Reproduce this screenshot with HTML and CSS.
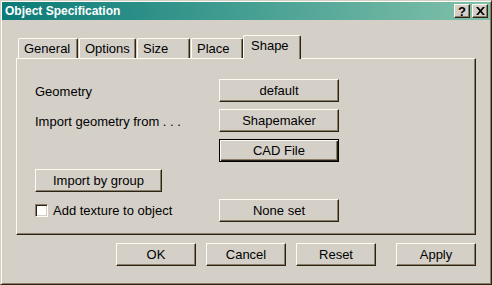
FILE: index.html
```html
<!DOCTYPE html>
<html>
<head>
  <meta charset="UTF-8">
  <title>Object Specification</title>
  <link rel="stylesheet" href="styles.css">
</head>
<body>
  <div class="window">
    <div class="titlebar">
      <span class="title">Object Specification</span>
      <div class="title-buttons">
        <div class="tbtn help">?</div>
        <div class="tbtn">
          <svg width="9" height="8" viewBox="0 0 9 8">
            <path d="M0 0h2.2l2.3 2.8 2.3-2.8h2.2l-3.4 4 3.4 4h-2.2l-2.3-2.8-2.3 2.8h-2.2l3.4-4z" fill="#000"/>
          </svg>
        </div>
      </div>
    </div>

    <div class="dialog">
      <div class="tabs">
        <div class="tab tab-general">General</div>
        <div class="tab tab-options">Options</div>
        <div class="tab tab-size">Size</div>
        <div class="tab tab-place">Place</div>
        <div class="tab tab-shape active">Shape</div>
      </div>

      <div class="pane">
        <div class="form-grid">
          <span class="label">Geometry</span>
          <div class="btn">default</div>

          <span class="label">Import geometry from . . .</span>
          <div class="btn">Shapemaker</div>

          <span></span>
          <div class="btn btn-default">CAD File</div>

          <div class="btn btn-group">Import by group</div>
          <span></span>

          <label class="check"><span class="box"></span>Add texture to object</label>
          <div class="btn">None set</div>
        </div>
      </div>

      <div class="actions">
        <div class="btn btn-action">OK</div>
        <div class="btn btn-action">Cancel</div>
        <div class="btn btn-action">Reset</div>
        <div class="btn btn-action btn-apply">Apply</div>
      </div>
    </div>
  </div>
</body>
</html>
```

FILE: styles.css
```css
body {
  margin: 0;
  padding: 0;
  background-color: #d4d0c8;
  font-family: "Liberation Sans", Arial, sans-serif;
  font-size: 13px;
  color: #000;
}
.window {
  box-sizing: border-box;
  width: 492px;
  height: 285px;
  padding: 1px;
  background-color: #d4d0c8;
  border: 1px solid;
  border-color: #d4d0c8 #2a2418 #2a2418 #d4d0c8;
  box-shadow: inset 1px 1px #fffbf0, inset -1px -1px #8c7e66;
  display: flex;
  flex-direction: column;
}
.titlebar {
  height: 18px;
  display: flex;
  align-items: center;
  justify-content: space-between;
  padding: 0 2px 0 3px;
  background: linear-gradient(to right, #0b7b78, #3f9b90 45%, #82c1aa);
}
.title {
  color: #fff;
  font-weight: bold;
  font-size: 12px;
}
.title-buttons {
  display: flex;
  gap: 2px;
}
.tbtn {
  box-sizing: border-box;
  width: 16px;
  height: 14px;
  display: flex;
  align-items: center;
  justify-content: center;
  background-color: #d4d0c8;
  border: 1px solid;
  border-color: #fffbf0 #2a2418 #2a2418 #fffbf0;
  box-shadow: inset -1px -1px #8c7e66;
}
.help {
  font-weight: bold;
  font-size: 13px;
  line-height: 1;
}
.dialog {
  flex: 1;
  display: flex;
  flex-direction: column;
  padding: 15px 14px 15px 14px;
}
.tabs {
  height: 23px;
  display: flex;
  align-items: flex-end;
  padding-left: 2px;
}
.tab {
  box-sizing: border-box;
  height: 20px;
  padding: 2px 0 0 5px;
  margin-right: 1px;
  border-top: 1px solid #fffbf0;
  border-left: 1px solid #fffbf0;
  border-right: 1px solid #2a2418;
  border-radius: 2px 2px 0 0;
  box-shadow: inset -1px 0 #8c7e66;
  line-height: 16px;
}
.tab-general { width: 60px; }
.tab-options { width: 57px; }
.tab-size { width: 53px; }
.tab-place { width: 52px; margin-right: 0; }
.tab.active {
  width: 58px;
  height: 24px;
  margin-bottom: -1px;
  padding: 2px 0 0 7px;
  position: relative;
  z-index: 1;
  background-color: #d4d0c8;
}
.pane {
  box-sizing: border-box;
  height: 177px;
  padding: 20px 0 0 18px;
  border: 1px solid;
  border-color: #fffbf0 #2a2418 #2a2418 #fffbf0;
  box-shadow: inset -1px -1px #8c7e66;
}
.form-grid {
  display: grid;
  grid-template-columns: 184px 120px;
  grid-auto-rows: 23px;
  row-gap: 7px;
  align-items: center;
}
.label {
  padding-top: 2px;
}
.btn {
  box-sizing: border-box;
  height: 23px;
  display: flex;
  align-items: center;
  justify-content: center;
  background-color: #d4d0c8;
  border: 1px solid;
  border-color: #fffbf0 #2a2418 #2a2418 #fffbf0;
  box-shadow: inset -1px -1px #8c7e66;
}
.btn-default {
  border-color: #000;
  box-shadow: inset 1px 1px #fffbf0, inset -1px -1px #2a2418, inset -2px -2px #8c7e66;
}
.btn-group {
  width: 127px;
}
.check {
  display: flex;
  align-items: center;
  gap: 5px;
}
.box {
  box-sizing: border-box;
  width: 13px;
  height: 13px;
  background-color: #fff;
  border: 1px solid;
  border-color: #8c7e66 #fffbf0 #fffbf0 #8c7e66;
  box-shadow: inset 1px 1px #2a2418, inset -1px -1px #d4d0c8;
}
.actions {
  display: flex;
  justify-content: flex-end;
  gap: 10px;
  margin-top: 8px;
}
.btn-action {
  width: 80px;
}
.btn-apply {
  margin-left: 10px;
}
```
